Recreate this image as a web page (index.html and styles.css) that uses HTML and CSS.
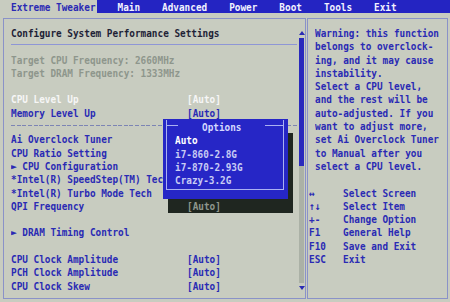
FILE: index.html
```html
<!DOCTYPE html>
<html lang="en">
<head>
    <meta charset="UTF-8">
    <title>BIOS Setup Utility</title>
    <link rel="stylesheet" href="styles.css">
</head>
<body>
<div class="bios">
    <ul class="bios-menu">
        <li class="bios-menu__item bios-menu__item--active">Extreme Tweaker</li>
        <li class="bios-menu__item">Main</li>
        <li class="bios-menu__item">Advanced</li>
        <li class="bios-menu__item">Power</li>
        <li class="bios-menu__item">Boot</li>
        <li class="bios-menu__item">Tools</li>
        <li class="bios-menu__item">Exit</li>
    </ul>

    <div class="bios-body">
        <section class="bios-panel bios-panel--main">
            <div class="bios-list">
                <div class="bios-row bios-row--title">Configure System Performance Settings</div>
                <div class="bios-rule"></div>
                <div class="bios-row bios-row--info">Target CPU Frequency: 2660MHz</div>
                <div class="bios-row bios-row--info">Target DRAM Frequency: 1333MHz</div>
                <div class="bios-row"></div>
                <div class="bios-row bios-row--selected"><span>CPU Level Up</span><span>[Auto]</span></div>
                <div class="bios-row"><span>Memory Level Up</span><span>[Auto]</span></div>
                <div class="bios-rule bios-rule--dashed"></div>
                <div class="bios-row">Ai Overclock Tuner</div>
                <div class="bios-row">CPU Ratio Setting</div>
                <div class="bios-row">&#9658; CPU Configuration</div>
                <div class="bios-row">*Intel(R) SpeedStep(TM) Tech</div>
                <div class="bios-row">*Intel(R) Turbo Mode Tech</div>
                <div class="bios-row bios-row--over"><span>QPI Frequency</span><span class="bios-row__dim">[Auto]</span></div>
                <div class="bios-row"></div>
                <div class="bios-row">&#9658; DRAM Timing Control</div>
                <div class="bios-row"></div>
                <div class="bios-row"><span>CPU Clock Amplitude</span><span>[Auto]</span></div>
                <div class="bios-row"><span>PCH Clock Amplitude</span><span>[Auto]</span></div>
                <div class="bios-row"><span>CPU Clock Skew</span><span>[Auto]</span></div>
            </div>

            <div class="bios-scroll">
                <span class="bios-scroll__up"></span>
                <div class="bios-scroll__track"><div class="bios-scroll__thumb"></div></div>
                <span class="bios-scroll__down"></span>
            </div>

            <div class="bios-popup">
                <div class="bios-popup__frame">
                    <div class="bios-popup__head"><span class="bios-popup__title">Options</span></div>
                    <div class="bios-row bios-popup__item bios-popup__item--current">Auto</div>
                    <div class="bios-row bios-popup__item">i7-860-2.8G</div>
                    <div class="bios-row bios-popup__item">i7-870-2.93G</div>
                    <div class="bios-row bios-popup__item">Crazy-3.2G</div>
                </div>
            </div>
        </section>

        <aside class="bios-panel bios-panel--help">
            <div class="bios-row">Warning: this function</div>
            <div class="bios-row">belongs to overclock-</div>
            <div class="bios-row">ing, and it may cause</div>
            <div class="bios-row">instability.</div>
            <div class="bios-row">Select a CPU level,</div>
            <div class="bios-row">and the rest will be</div>
            <div class="bios-row">auto-adjusted. If you</div>
            <div class="bios-row">want to adjust more,</div>
            <div class="bios-row">set Ai Overclock Tuner</div>
            <div class="bios-row">to Manual after you</div>
            <div class="bios-row">select a CPU level.</div>
            <div class="bios-row"></div>
            <ul class="bios-keys">
                <li class="bios-row bios-keys__item"><span>&#8596;</span><span>Select Screen</span></li>
                <li class="bios-row bios-keys__item"><span>&#8593;&#8595;</span><span>Select Item</span></li>
                <li class="bios-row bios-keys__item"><span>+-</span><span>Change Option</span></li>
                <li class="bios-row bios-keys__item"><span>F1</span><span>General Help</span></li>
                <li class="bios-row bios-keys__item"><span>F10</span><span>Save and Exit</span></li>
                <li class="bios-row bios-keys__item"><span>ESC</span><span>Exit</span></li>
            </ul>
        </aside>
    </div>
</div>
</body>
</html>
```

FILE: styles.css
```css
* { box-sizing: border-box; }

*, html {
    padding: 0;
    margin: 0;
}

html, body { background: #c8ccc0; }

body {
    width: 450px;
    height: 302px;
    overflow: hidden;
    font: bold 9.37px/13.3px "DejaVu Sans Mono", "Liberation Mono", monospace;
    color: #2a2ab4;
}

/* top menu */

.bios-menu {
    list-style: none;
    display: flex;
    gap: 20px;
    height: 13px;
    line-height: 13px;
    background: #2424c2;
}

.bios-menu__item {
    padding: 0 1px;
    color: #f2f2ff;
    white-space: pre;
    transform: scaleY(1.15);
}

.bios-menu__item--active {
    padding-left: 11px;
    background: #c8ccc0;
    color: #2a2ab4;
}

/* panels */

.bios-body {
    display: flex;
    gap: 1px;
    padding: 5px 2px 0 3px;
}

.bios-panel {
    height: 281px;
    border: 1px solid #8a92c8;
}

.bios-panel--main {
    position: relative;
    display: flex;
    width: 303px;
}

.bios-panel--help {
    width: 141px;
    padding: 7px 0 0 7px;
}

.bios-list {
    flex: 1;
    padding: 7px 0 0 7px;
}

.bios-row {
    height: 13.3px;
    white-space: pre;
    transform: scaleY(1.15);
}

.bios-list .bios-row {
    display: grid;
    grid-template-columns: 176px auto;
}

.bios-row--title { color: #1e2236; }

.bios-row--info { color: #8e968c; }

.bios-row--selected { color: #f6f6f6; }

.bios-row--over {
    position: relative;
    z-index: 2;
}

.bios-row__dim { color: #8e968c; }

.bios-rule {
    position: relative;
    height: 13.3px;
    margin-right: 1px;
}

.bios-rule::before {
    content: "";
    position: absolute;
    left: 0;
    right: 0;
    top: 5px;
    height: 1px;
    background: #8e96d6;
}

.bios-rule--dashed::before {
    top: 6px;
    background: repeating-linear-gradient(90deg, #7c84b4 0 4px, transparent 4px 5.64px);
}

/* scrollbar */

.bios-scroll {
    width: 7px;
    display: flex;
    flex-direction: column;
    align-items: center;
    gap: 3px;
    padding: 12px 0 8px;
}

.bios-scroll__up,
.bios-scroll__down {
    width: 0;
    height: 0;
    border-left: 3px solid transparent;
    border-right: 3px solid transparent;
}

.bios-scroll__up { border-bottom: 4px solid #2a2ab4; }

.bios-scroll__down { border-top: 4px solid #2a2ab4; }

.bios-scroll__track {
    flex: 1;
    width: 5px;
    background: #abb1a6;
}

.bios-scroll__thumb {
    height: 128px;
    background: #2a2abc;
}

/* options popup */

.bios-popup {
    position: absolute;
    left: 159px;
    top: 100px;
    width: 125px;
    height: 80px;
    padding: 6px 4px 4px 3px;
    background: #2626c6;
    box-shadow: 5px 14px 0 #1f2620;
}

.bios-popup__frame {
    height: 100%;
    padding-left: 8px;
    border: 1px solid #aab0f2;
    border-top: 0;
}

.bios-popup__head {
    display: flex;
    height: 13.3px;
    margin: -5px -1px 0 -9px;
}

.bios-popup__head::before,
.bios-popup__head::after {
    content: "";
    height: 1px;
    margin-top: 5px;
    background: #aab0f2;
}

.bios-popup__head::before { width: 12px; }

.bios-popup__head::after { flex: 1; }

.bios-popup__title {
    padding: 0 24px;
    color: #d4d8ff;
    transform: scaleY(1.15);
}

.bios-popup__item { color: #c8ccf4; }

.bios-popup__item--current { color: #ffffff; }

/* key legend */

.bios-keys {
    list-style: none;
    margin-left: -6px;
}

.bios-keys__item {
    display: grid;
    grid-template-columns: 34px auto;
}
```
